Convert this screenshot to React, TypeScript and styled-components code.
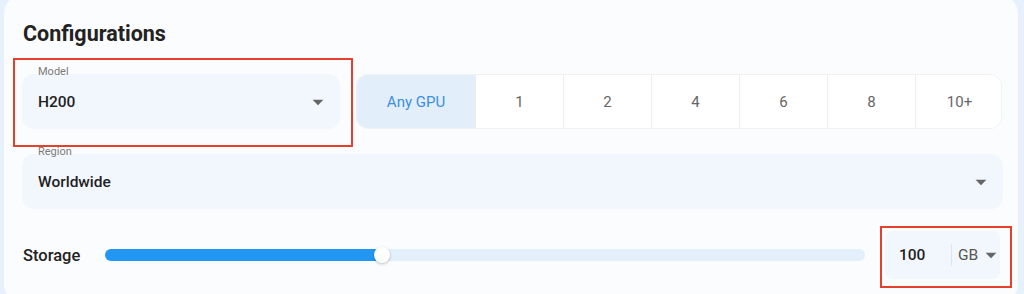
import React from "react";
import styled, { createGlobalStyle } from "styled-components";

const GlobalStyle = createGlobalStyle`
  html, body {
    margin: 0;
    padding: 0;
    background: #e7f1fb;
    font-family: Roboto, "Noto Sans", "Liberation Sans", sans-serif;
    overflow: hidden;
  }
`;

const Card = styled.div`
  position: relative;
  margin: -6px 0 0 4px;
  width: 1014px;
  height: 310px;
  box-sizing: border-box;
  padding: 26px 15px 0 18px;
  background: #fbfcfd;
  border-radius: 20px;
`;

const Title = styled.h2`
  margin: 0 0 0 1px;
  font-size: 21.5px;
  line-height: 28px;
  font-weight: 700;
  color: #222;
`;

const TopRow = styled.div`
  display: grid;
  grid-template-columns: 318px 1fr;
  gap: 16px;
  margin-top: 26px;
  width: 980px;
`;

const Field = styled.div<{ $width?: string }>`
  position: relative;
  display: flex;
  align-items: center;
  justify-content: space-between;
  height: 55px;
  width: ${(p) => p.$width || "auto"};
  box-sizing: border-box;
  padding: 0 9px 0 16px;
  background: #f2f7fd;
  border-radius: 12px;
`;

const FieldLabel = styled.span`
  position: absolute;
  top: -9px;
  left: 16px;
  font-size: 11px;
  color: #7a7a7a;
`;

const FieldValue = styled.span`
  font-size: 15.5px;
  font-weight: 500;
  color: #1f1f1f;
`;

const Caret = styled.svg`
  width: 26px;
  height: 26px;
  fill: #666;
  flex: none;
`;

const Arrow = () => (
  <Caret viewBox="0 0 24 24">
    <path d="M7 10l5 5 5-5z" />
  </Caret>
);

const Toggle = styled.div`
  display: grid;
  grid-template-columns: 118px repeat(6, 88px);
  height: 55px;
  border-radius: 12px;
  overflow: hidden;
  border: 1px solid #f0f1f2;
  box-sizing: border-box;
  width: 646px;
`;

const ToggleCell = styled.div<{ $active?: boolean }>`
  display: flex;
  align-items: center;
  justify-content: center;
  font-size: 15px;
  color: ${(p) => (p.$active ? "#3b8fe2" : "#666")};
  background: ${(p) => (p.$active ? "#e3eefb" : "#fff")};
  & + & {
    border-left: 1px solid #ededed;
  }
`;

const RegionRow = styled.div`
  margin-top: 25px;
`;

const StorageRow = styled.div`
  display: flex;
  align-items: center;
  margin-top: 21px;
  height: 50px;
`;

const StorageLabel = styled.span`
  width: 82px;
  font-size: 16.5px;
  font-weight: 500;
  color: #222;
  margin-left: 1px;
  flex: none;
`;

const Track = styled.div`
  position: relative;
  flex: 1;
  height: 12px;
  border-radius: 6px;
  background: #e3effb;
  margin-right: 20px;
`;

const Fill = styled.div`
  height: 100%;
  border-radius: 6px;
  background: #2196f3;
`;

const Thumb = styled.div`
  position: absolute;
  top: 50%;
  width: 16px;
  height: 16px;
  border-radius: 50%;
  background: #fff;
  box-shadow: 0 1px 3px rgba(0, 0, 0, 0.25);
  transform: translate(-50%, -50%);
`;

const Amount = styled.div`
  display: flex;
  align-items: center;
  width: 115px;
  height: 48px;
  box-sizing: border-box;
  padding: 0 0 0 14px;
  background: #f2f7fd;
  border-radius: 8px;
  flex: none;
  margin-right: 3px;
`;

const AmountValue = styled.span`
  flex: none;
  width: 52px;
  font-size: 15.5px;
  font-weight: 500;
  color: #1f1f1f;
`;

const Divider = styled.span`
  flex: none;
  width: 1px;
  height: 22px;
  background: #dfe5ec;
  margin-right: 6px;
`;

const Unit = styled.span`
  flex: none;
  font-size: 15.5px;
  color: #555;
  display: flex;
  align-items: center;

  svg {
    margin-right: -4px;
  }
`;

const Highlight = styled.div<{ $x: number; $y: number; $w: number; $h: number }>`
  position: absolute;
  left: ${(p) => p.$x}px;
  top: ${(p) => p.$y}px;
  width: ${(p) => p.$w}px;
  height: ${(p) => p.$h}px;
  border: 2px solid #e5402b;
  box-sizing: border-box;
  pointer-events: none;
`;

const counts = ["Any GPU", "1", "2", "4", "6", "8", "10+"];

export default function App() {
  const pct = 36.4;
  return (
    <>
      <GlobalStyle />
      <Card>
        <Title>Configurations</Title>
        <TopRow>
          <Field>
            <FieldLabel>Model</FieldLabel>
            <FieldValue>H200</FieldValue>
            <Arrow />
          </Field>
          <Toggle>
            {counts.map((c, i) => (
              <ToggleCell key={c} $active={i === 0}>
                {c}
              </ToggleCell>
            ))}
          </Toggle>
        </TopRow>
        <RegionRow>
          <Field $width="981px">
            <FieldLabel>Region</FieldLabel>
            <FieldValue>Worldwide</FieldValue>
            <Arrow />
          </Field>
        </RegionRow>
        <StorageRow>
          <StorageLabel>Storage</StorageLabel>
          <Track>
            <Fill style={{ width: `${pct}%` }} />
            <Thumb style={{ left: `${pct}%` }} />
          </Track>
          <Amount>
            <AmountValue>100</AmountValue>
            <Divider />
            <Unit>
              GB
              <Arrow />
            </Unit>
          </Amount>
        </StorageRow>
        <Highlight $x={9} $y={64} $w={340} $h={89} />
        <Highlight $x={876} $y={232} $w={132} $h={62} />
      </Card>
    </>
  );
}
